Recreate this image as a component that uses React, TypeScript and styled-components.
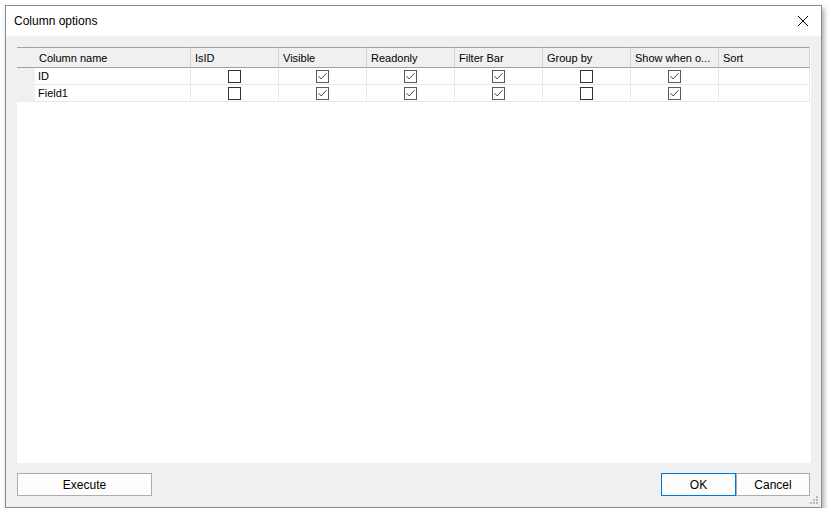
import React from 'react'
import styled, { createGlobalStyle } from 'styled-components'

const GlobalStyle = createGlobalStyle`
  html, body {
    margin: 0;
    padding: 0;
    background: #ffffff;
  }
  body {
    font-family: "Liberation Sans", "Noto Sans", Arial, sans-serif;
    font-size: 11px;
    color: #000;
  }
`

// Dialog frame
const Window = styled.div`
  margin: 5px 0 0 5px;
  width: 815px;
  height: 501px;
  border: 1px solid #8c8c8c;
  background: #f0f0f0;
  box-shadow: 2px 3px 5px rgba(0, 0, 0, 0.35);
  display: flex;
  flex-direction: column;
  position: relative;
`

const TitleBar = styled.div`
  height: 30px;
  background: #ffffff;
  display: flex;
  align-items: center;
  justify-content: space-between;
  padding: 0 8px 0 8px;
  font-size: 12px;
`

const CloseButton = styled.div`
  width: 20px;
  height: 20px;
  display: flex;
  align-items: center;
  justify-content: center;
`

const Body = styled.div`
  flex: 1;
  display: flex;
  flex-direction: column;
  padding: 11px 10px 11px 11px;
  gap: 10px;
`

const GridArea = styled.div`
  flex: 1;
  background: #ffffff;
`

const Table = styled.div`
  display: grid;
  grid-template-columns: 18px 156px repeat(6, 88px) 91px;
`

const HeaderCell = styled.div<{ $first?: boolean }>`
  height: 21px;
  box-sizing: border-box;
  background: #f0f0f0;
  border-top: 1px solid #a0a0a0;
  border-bottom: 1px solid #a0a0a0;
  border-right: 1px solid ${(p) => (p.$first ? '#f0f0f0' : '#d4d4d4')};
  padding: 3px 5px 0 4px;
  white-space: nowrap;
  overflow: hidden;
  line-height: 15px;
`

const RowHead = styled.div`
  height: 17px;
  background: #f0f0f0;
`

const Cell = styled.div<{ $center?: boolean }>`
  height: 17px;
  box-sizing: border-box;
  border-right: 1px solid #e8e8e8;
  border-bottom: 1px solid #e8e8e8;
  display: flex;
  align-items: center;
  justify-content: ${(p) => (p.$center ? 'center' : 'flex-start')};
  padding-left: ${(p) => (p.$center ? '0' : '3px')};
  line-height: 15px;
`

const Box = styled.div<{ $checked?: boolean }>`
  width: 13px;
  height: 13px;
  box-sizing: border-box;
  border: 1px solid ${(p) => (p.$checked ? '#5a5a5a' : '#333333')};
  background: #fff;
  display: flex;
  align-items: center;
  justify-content: center;
`

const Footer = styled.div`
  display: flex;
  justify-content: space-between;
  align-items: center;
  padding-right: 1px;
`

const Buttons = styled.div`
  display: flex;
`

const Button = styled.button<{ $w: number; $default?: boolean }>`
  width: ${(p) => p.$w}px;
  height: 23px;
  box-sizing: border-box;
  background: #fdfdfd;
  border: 1px solid ${(p) => (p.$default ? '#0078d7' : '#adadad')};
  font-family: inherit;
  font-size: 12px;
  color: #000;
  padding: 0;
`

const Grip = styled.div`
  position: absolute;
  right: 2px;
  bottom: 2px;
  width: 10px;
  height: 10px;
`

const Check = ({ on }: { on: boolean }) => (
  <Box $checked={on}>
    {on && (
      <svg width="11" height="11" viewBox="0 0 11 11">
        <path d="M1.5 5.2 L4.2 8 L9.5 2.2" fill="none" stroke="#4a4a4a" strokeWidth="1" />
      </svg>
    )}
  </Box>
)

const columns = ['Column name', 'IsID', 'Visible', 'Readonly', 'Filter Bar', 'Group by', 'Show when o...', 'Sort']

const rows = [
  { name: 'ID', flags: [false, true, true, true, false, true] },
  { name: 'Field1', flags: [false, true, true, true, false, true] },
]

export default function App() {
  return (
    <>
      <GlobalStyle />
      <Window>
        <TitleBar>
          <span>Column options</span>
          <CloseButton>
            <svg width="12" height="12" viewBox="0 0 12 12">
              <path d="M1 1 L11 11 M11 1 L1 11" stroke="#000" strokeWidth="1" />
            </svg>
          </CloseButton>
        </TitleBar>
        <Body>
          <GridArea>
            <Table>
              <HeaderCell $first />
              {columns.map((c) => (
                <HeaderCell key={c}>{c}</HeaderCell>
              ))}
              {rows.map((r) => (
                <React.Fragment key={r.name}>
                  <RowHead />
                  <Cell>{r.name}</Cell>
                  {r.flags.map((f, i) => (
                    <Cell $center key={i}>
                      <Check on={f} />
                    </Cell>
                  ))}
                  <Cell />
                </React.Fragment>
              ))}
            </Table>
          </GridArea>
          <Footer>
            <Button $w={135}>Execute</Button>
            <Buttons>
              <Button $w={75} $default>OK</Button>
              <Button $w={74}>Cancel</Button>
            </Buttons>
          </Footer>
        </Body>
        <Grip>
          <svg width="10" height="10" viewBox="0 0 10 10">
            <g fill="#b8b8b8">
              <rect x="7" y="1" width="2" height="2" />
              <rect x="4" y="4" width="2" height="2" />
              <rect x="7" y="4" width="2" height="2" />
              <rect x="1" y="7" width="2" height="2" />
              <rect x="4" y="7" width="2" height="2" />
              <rect x="7" y="7" width="2" height="2" />
            </g>
          </svg>
        </Grip>
      </Window>
    </>
  )
}
